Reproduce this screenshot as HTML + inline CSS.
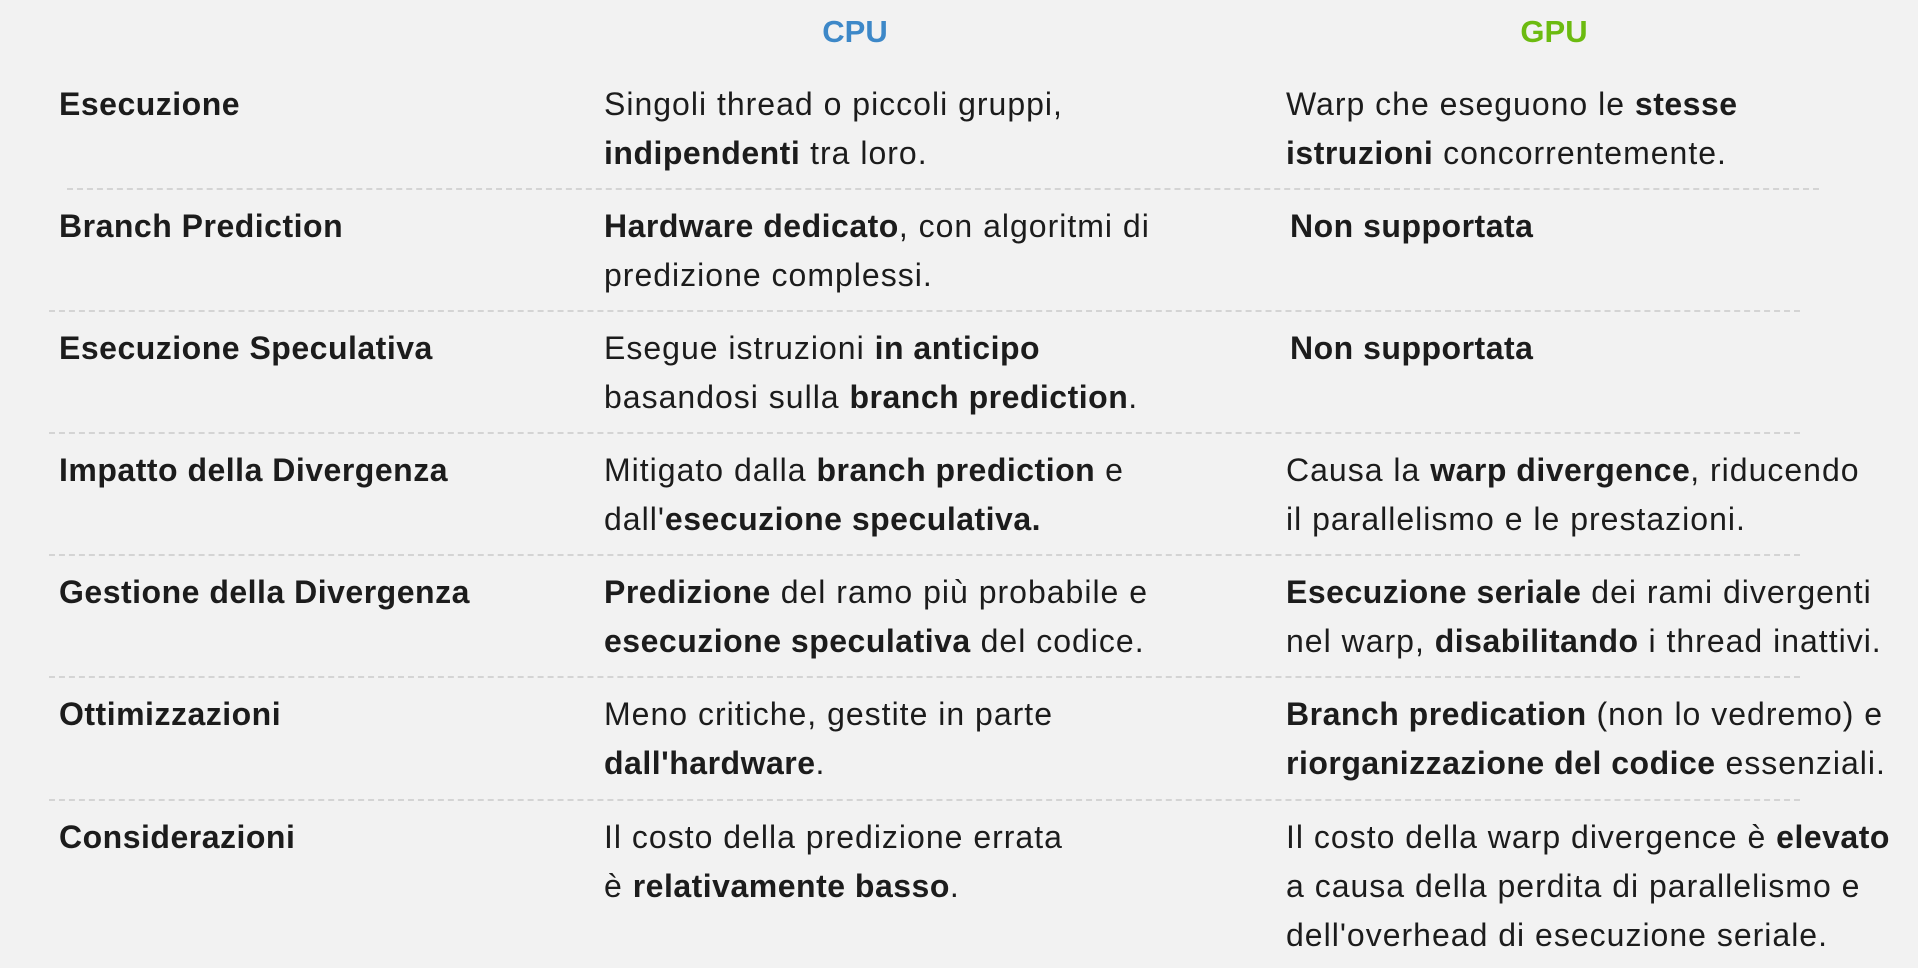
<!DOCTYPE html>
<html><head><meta charset="utf-8"><style>
html,body{margin:0;padding:0;background:#f2f2f2;}
body{width:1918px;height:968px;position:relative;overflow:hidden;font-family:"Liberation Sans",Arial,sans-serif;color:#1c1c1c;font-size:32px;letter-spacing:1px;}
.t{position:absolute;line-height:49px;white-space:nowrap;}
b{font-weight:bold;letter-spacing:0.5px;}
.h{position:absolute;top:12px;font-size:31px;line-height:40px;font-weight:bold;letter-spacing:0;transform:translateX(-50%);}
.d{position:absolute;height:0;border-top:2px dashed #d4d4d4;}
</style></head><body>
<div class="h" style="left:855px;color:#3d88c8;">CPU</div>
<div class="h" style="left:1554px;color:#6cbb10;">GPU</div>

<div class="t" style="left:59px;top:80px"><b>Esecuzione</b></div>
<div class="t" style="left:604px;top:80px">Singoli thread o piccoli gruppi,<br><b>indipendenti</b> tra loro.</div>
<div class="t" style="left:1286px;top:80px">Warp che eseguono le <b>stesse</b><br><b>istruzioni</b> concorrentemente.</div>
<div class="d" style="left:67px;width:1752px;top:188px"></div>

<div class="t" style="left:59px;top:202px"><b>Branch Prediction</b></div>
<div class="t" style="left:604px;top:202px"><b>Hardware dedicato</b>, con algoritmi di<br>predizione complessi.</div>
<div class="t" style="left:1290px;top:202px"><b>Non supportata</b></div>
<div class="d" style="left:49px;width:1751px;top:310px"></div>

<div class="t" style="left:59px;top:324px"><b>Esecuzione Speculativa</b></div>
<div class="t" style="left:604px;top:324px">Esegue istruzioni <b>in anticipo</b><br>basandosi sulla <b>branch prediction</b>.</div>
<div class="t" style="left:1290px;top:324px"><b>Non supportata</b></div>
<div class="d" style="left:49px;width:1751px;top:432px"></div>

<div class="t" style="left:59px;top:446px"><b>Impatto della Divergenza</b></div>
<div class="t" style="left:604px;top:446px">Mitigato dalla <b>branch prediction</b> e<br>dall'<b>esecuzione speculativa.</b></div>
<div class="t" style="left:1286px;top:446px">Causa la <b>warp divergence</b>, riducendo<br>il parallelismo e le prestazioni.</div>
<div class="d" style="left:49px;width:1751px;top:554px"></div>

<div class="t" style="left:59px;top:568px"><b>Gestione della Divergenza</b></div>
<div class="t" style="left:604px;top:568px"><b>Predizione</b> del ramo più probabile e<br><b>esecuzione speculativa</b> del codice.</div>
<div class="t" style="left:1286px;top:568px"><b>Esecuzione seriale</b> dei rami divergenti<br>nel warp, <b>disabilitando</b> i thread inattivi.</div>
<div class="d" style="left:49px;width:1751px;top:676px"></div>

<div class="t" style="left:59px;top:690px"><b>Ottimizzazioni</b></div>
<div class="t" style="left:604px;top:690px">Meno critiche, gestite in parte<br><b>dall'hardware</b>.</div>
<div class="t" style="left:1286px;top:690px"><b>Branch predication</b> (non lo vedremo) e<br><b>riorganizzazione del codice</b> essenziali.</div>
<div class="d" style="left:49px;width:1751px;top:799px"></div>

<div class="t" style="left:59px;top:813px"><b>Considerazioni</b></div>
<div class="t" style="left:604px;top:813px">Il costo della predizione errata<br>è <b>relativamente basso</b>.</div>
<div class="t" style="left:1286px;top:813px">Il costo della warp divergence è <b>elevato</b><br>a causa della perdita di parallelismo e<br>dell'overhead di esecuzione seriale.</div>
</body></html>
